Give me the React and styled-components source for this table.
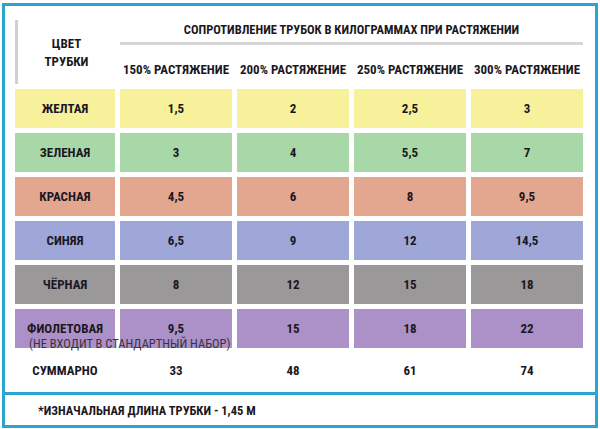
import React from "react";
import styled, { createGlobalStyle } from "styled-components";

const GlobalStyle = createGlobalStyle`
  body {
    margin: 0;
    background-color: #ffffff;
    font-family: "Roboto Condensed", Roboto, "Liberation Sans", sans-serif;
  }
`;

const Frame = styled.div`
  width: 590px;
  height: 419px;
  margin: 3px 0 0 2px;
  border: 3px solid #2ba4cf;
  display: flex;
  flex-direction: column;
  background-color: #fff;
`;

const TableArea = styled.div`
  flex: 1;
  padding: 14px 12px 0 10px;
`;

const Grid = styled.div`
  display: grid;
  grid-template-columns: 100px repeat(4, 112px);
  grid-template-rows: 25px 34px;
  grid-auto-rows: 39px;
  column-gap: 5px;
  row-gap: 5px;
  color: #1b1722;
  font-weight: bold;
  font-size: 13px;
`;

const HeadLabel = styled.div`
  grid-row: 1 / 3;
  border-left: 3px solid #cfcfcf;
  display: flex;
  align-items: center;
  justify-content: center;
  text-align: center;
  line-height: 18px;
  padding-top: 2px;
`;

const Title = styled.div`
  grid-column: 2 / 6;
  border-bottom: 3px solid #d6d6d6;
  text-align: center;
  padding-top: 3px;
  line-height: 14px;
  font-size: 12.5px;
`;

const ColHead = styled.div`
  padding-top: 13px;
  line-height: 14px;
  text-align: center;
  white-space: nowrap;
`;

const Cell = styled.div`
  background-color: ${(p) => p.bg || "transparent"};
  display: flex;
  align-items: center;
  justify-content: center;
  position: relative;
`;

const SumCell = styled(Cell)`
  height: 34px;
`;

const Note = styled.span`
  position: absolute;
  left: 14px;
  top: 27px;
  z-index: 1;
  white-space: nowrap;
  font-weight: normal;
  color: #3a3340;
  font-size: 12.5px;
`;

const Footer = styled.div`
  border-top: 3px solid #2ba4cf;
  height: 35px;
  display: flex;
  align-items: center;
  padding-left: 33px;
  font-weight: bold;
  font-size: 12.5px;
  color: #1b1722;
`;

const rows = [
  { name: "ЖЕЛТАЯ", bg: "#f8f19c", values: ["1,5", "2", "2,5", "3"] },
  { name: "ЗЕЛЕНАЯ", bg: "#a8d8a8", values: ["3", "4", "5,5", "7"] },
  { name: "КРАСНАЯ", bg: "#e3a68f", values: ["4,5", "6", "8", "9,5"] },
  { name: "СИНЯЯ", bg: "#9ea7d8", values: ["6,5", "9", "12", "14,5"] },
  { name: "ЧЁРНАЯ", bg: "#9b9899", values: ["8", "12", "15", "18"] },
  {
    name: "ФИОЛЕТОВАЯ",
    bg: "#ab91c8",
    values: ["9,5", "15", "18", "22"],
    note: "(НЕ ВХОДИТ В СТАНДАРТНЫЙ НАБОР)",
  },
];

const stretches = ["150%", "200%", "250%", "300%"];
const totals = ["33", "48", "61", "74"];

function App() {
  return (
    <>
      <GlobalStyle />
      <Frame>
        <TableArea>
          <Grid>
            <HeadLabel>
              ЦВЕТ
              <br />
              ТРУБКИ
            </HeadLabel>
            <Title>СОПРОТИВЛЕНИЕ ТРУБОК В КИЛОГРАММАХ ПРИ РАСТЯЖЕНИИ</Title>
            {stretches.map((s) => (
              <ColHead key={s}>{s} РАСТЯЖЕНИЕ</ColHead>
            ))}
            {rows.map((row) => (
              <React.Fragment key={row.name}>
                <Cell bg={row.bg}>
                  {row.name}
                  {row.note && <Note>{row.note}</Note>}
                </Cell>
                {row.values.map((v, i) => (
                  <Cell key={i} bg={row.bg}>
                    {v}
                  </Cell>
                ))}
              </React.Fragment>
            ))}
            <SumCell>СУММАРНО</SumCell>
            {totals.map((t) => (
              <SumCell key={t}>{t}</SumCell>
            ))}
          </Grid>
        </TableArea>
        <Footer>*ИЗНАЧАЛЬНАЯ ДЛИНА ТРУБКИ - 1,45 М</Footer>
      </Frame>
    </>
  );
}

export default App;
